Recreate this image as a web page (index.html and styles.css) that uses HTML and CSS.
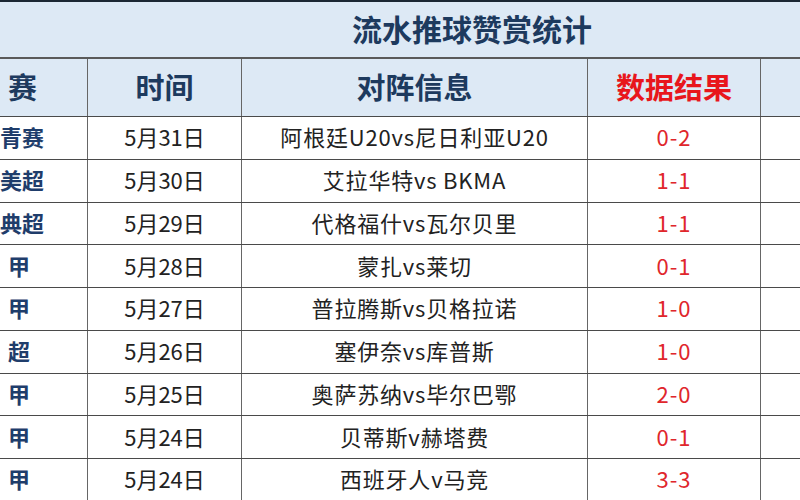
FILE: index.html
```html
<!DOCTYPE html>
<html lang="zh-CN">
<head>
<meta charset="utf-8">
<title>流水推球赞赏统计</title>
<link rel="stylesheet" href="styles.css">
</head>
<body>
<div class="sheet">
  <div class="title">流水推球赞赏统计</div>
  <div class="row head">
    <div class="cell first">赛</div>
    <div class="cell">时间</div>
    <div class="cell">对阵信息</div>
    <div class="cell red">数据结果</div>
    <div class="cell last"></div>
  </div>
  <div class="row"><div class="cell first league two">青赛</div><div class="cell">5月31日</div><div class="cell match">阿根廷U20vs尼日利亚U20</div><div class="cell score">0-2</div><div class="cell last"></div></div>
  <div class="row"><div class="cell first league two">美超</div><div class="cell">5月30日</div><div class="cell match">艾拉华特vs BKMA</div><div class="cell score">1-1</div><div class="cell last"></div></div>
  <div class="row"><div class="cell first league two">典超</div><div class="cell">5月29日</div><div class="cell match">代格福什vs瓦尔贝里</div><div class="cell score">1-1</div><div class="cell last"></div></div>
  <div class="row"><div class="cell first league">甲</div><div class="cell">5月28日</div><div class="cell match">蒙扎vs莱切</div><div class="cell score">0-1</div><div class="cell last"></div></div>
  <div class="row"><div class="cell first league">甲</div><div class="cell">5月27日</div><div class="cell match">普拉腾斯vs贝格拉诺</div><div class="cell score">1-0</div><div class="cell last"></div></div>
  <div class="row"><div class="cell first league">超</div><div class="cell">5月26日</div><div class="cell match">塞伊奈vs库普斯</div><div class="cell score">1-0</div><div class="cell last"></div></div>
  <div class="row"><div class="cell first league">甲</div><div class="cell">5月25日</div><div class="cell match">奥萨苏纳vs毕尔巴鄂</div><div class="cell score">2-0</div><div class="cell last"></div></div>
  <div class="row"><div class="cell first league">甲</div><div class="cell">5月24日</div><div class="cell match">贝蒂斯v赫塔费</div><div class="cell score">0-1</div><div class="cell last"></div></div>
  <div class="row"><div class="cell first league">甲</div><div class="cell">5月24日</div><div class="cell match">西班牙人v马竞</div><div class="cell score">3-3</div><div class="cell last"></div></div>
</div>
</body>
</html>
```
FILE: styles.css
```css
html, body {
  margin: 0;
  padding: 0;
  background: #ffffff;
  overflow: hidden;
  width: 800px;
  height: 500px;
}
body {
  font-family: "Noto Sans CJK SC", "Noto Sans", sans-serif;
  color: #222222;
}
.sheet {
  width: 800px;
}
.title {
  box-sizing: border-box;
  height: 57px;
  border-top: 2px solid #1b2733;
  background: #dde9f5;
  display: flex;
  align-items: center;
  justify-content: center;
  padding-left: 144px;
  padding-bottom: 3px;
  font-size: 30px;
  font-weight: 700;
  color: #1d3a5e;
}
.row {
  box-sizing: border-box;
  display: grid;
  grid-template-columns: 88px 154px 346px 173px 1fr;
  height: 42.75px;
  border-top: 1px solid #4a4a4a;
  background: #ffffff;
}
.row.head {
  height: 59px;
  border-top: 2px solid #5a5a5a;
  background: #dde9f5;
  font-weight: 700;
  color: #1d3a5e;
}
.cell {
  display: flex;
  align-items: center;
  justify-content: center;
  border-right: 1.5px solid #666666;
  font-size: 22px;
  white-space: nowrap;
  padding-bottom: 3px;
}
.row.head .cell {
  font-size: 29px;
  padding-bottom: 4px;
}
.cell.first {
  justify-content: flex-start;
  padding-left: 8px;
}
.cell.first.two {
  padding-left: 0;
}
.cell.last {
  border-right: none;
}
.cell.red {
  color: #e8161c;
}
.cell.league {
  font-weight: 700;
  color: #1f3d6b;
}
.cell.match {
  letter-spacing: 0.8px;
}
.cell.score {
  color: #e0262c;
  letter-spacing: 1px;
}
```
